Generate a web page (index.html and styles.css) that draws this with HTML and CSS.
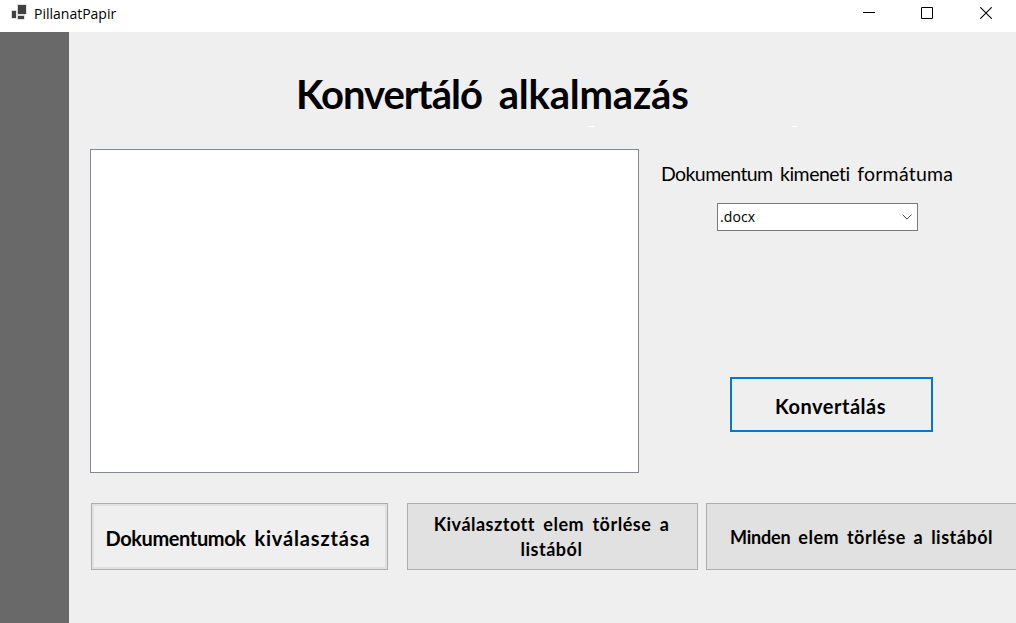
FILE: index.html
```html
<!DOCTYPE html>
<html lang="hu">
<head>
<meta charset="utf-8">
<title>PillanatPapir</title>
<link rel="stylesheet" href="styles.css">
</head>
<body>
<div class="window">
  <header class="titlebar">
    <svg class="app-icon" width="18" height="18" viewBox="0 0 18 18">
      <path fill="#c4c4c4" d="M7.300.600h9.200v9.800H7.300zM1.300 6.300h5.200v8.200H1.300zM7.300 11.300h7.200v4.200H7.300z"/>
      <path fill="#404040" d="M8 1h8v9H8zM2 7h4v7H2zM8 12h6v3H8z"/>
    </svg>
    <span class="app-name">PillanatPapir</span>
    <div class="controls">
      <svg width="12" height="12" viewBox="0 0 12 12"><path d="M0 5.5h12" stroke="#000"/></svg>
      <svg class="maximize" width="12" height="12" viewBox="0 0 12 12"><path d="M.5.5h11v11H.5z" fill="none" stroke="#000"/></svg>
      <svg width="12" height="12" viewBox="0 0 12 12"><path d="M.3.3l11.4 11.4M11.7.3L.3 11.7" stroke="#000" stroke-width="1.1"/></svg>
    </div>
  </header>
  <div class="body">
    <aside class="sidebar"></aside>
    <main class="main">
      <h1 class="title"><span class="title-first">Konvertáló</span> <span class="title-second">alkalmazás</span></h1>
      <i class="glint glint-left"></i>
      <i class="glint glint-right"></i>
      <div class="work">
        <div class="listbox"></div>
        <section class="options">
          <label class="format-label"><span class="snug">Dokumentum</span> kimeneti <span class="loose">formátuma</span></label>
          <div class="combo">
            <span class="combo-value">.docx</span>
            <svg width="10" height="6" viewBox="0 0 10 6"><path d="M.5.6L5 5.1 9.500.6" fill="none" stroke="#444"/></svg>
          </div>
          <button class="btn btn-convert">Konvertálás</button>
        </section>
      </div>
      <div class="actions">
        <button class="btn btn-pick"><span class="snug">Dokumentumok</span> <span class="loose">kiválasztása</span></button>
        <button class="btn btn-remove">Kiválasztott elem törlése a<br>listából</button>
        <button class="btn btn-clear"><span class="snug">Minden</span> elem törlése a listából</button>
      </div>
    </main>
  </div>
</div>
</body>
</html>
```
FILE: styles.css
```css
* { box-sizing: border-box; }

body {
  margin: 0;
  overflow: hidden;
  color: #000;
  font-family: "Open Sans", sans-serif;
}

.window {
  display: flex;
  flex-direction: column;
  width: 1016px;
  height: 623px;
  overflow: hidden;
  background: #efefef;
}

.titlebar {
  display: flex;
  flex: none;
  height: 32px;
  padding: 4px 24px 0 10px;
  background: #fff;
}

.app-icon { margin-right: 6px; }

.app-name {
  font-size: 14px;
  line-height: 20px;
}

.controls {
  display: flex;
  margin: 3px 0 0 auto;
}

.maximize { margin: 0 47px 0 46px; }

.body {
  display: flex;
  flex: 1;
}

.sidebar {
  flex: none;
  width: 69px;
  background: #696969;
}

.main {
  position: relative;
  flex: none;
  width: 947px;
  overflow: hidden;
}

.title {
  height: 117px;
  margin: 0;
  padding: 37px 0 0 227px;
  font: 700 40px/50px "Comic Sans MS", Lato, sans-serif;
  white-space: nowrap;
  word-spacing: 7px;
}

.title-first { letter-spacing: -1px; }
.title-second { letter-spacing: -0.2px; }

.glint {
  position: absolute;
  top: 94px;
  height: 1px;
  background: #fff;
}

.glint-left { left: 519px; width: 7px; }
.glint-right { left: 723px; width: 5px; }

.work {
  display: flex;
  height: 324px;
  padding-left: 21px;
}

.listbox {
  flex: none;
  width: 549px;
  border: 1px solid #828790;
  background: #fff;
}

.options {
  display: flex;
  flex-direction: column;
  padding: 12px 0 0 22px;
}

.format-label {
  font: 400 19.5px/26px "Comic Sans MS", Lato, sans-serif;
  font-variant-ligatures: none;
  letter-spacing: -0.5px;
  word-spacing: 3px;
  white-space: nowrap;
}

.format-label .snug { letter-spacing: -0.6px; }
.format-label .loose { letter-spacing: 0.25px; }

.combo {
  display: flex;
  align-items: center;
  justify-content: space-between;
  width: 201px;
  height: 28px;
  margin: 16px 0 0 56px;
  padding: 0 5px 0 2px;
  border: 1px solid #7a7a7a;
  background: #fff;
  font-size: 14px;
}

.combo-value {
  padding-bottom: 2px;
  letter-spacing: 0.1px;
}

.btn {
  flex: none;
  height: 67px;
  padding: 0;
  border: 1px solid #adadad;
  background: #e1e1e1;
  color: #000;
  font: 700 18px/25px "Comic Sans MS", Lato, sans-serif;
  font-variant-ligatures: none;
  letter-spacing: 0.5px;
  word-spacing: 3.5px;
  text-align: center;
  white-space: nowrap;
}

.btn-convert {
  width: 203px;
  height: 55px;
  margin: 146px 0 0 69px;
  padding: 4px 2px 0 0;
  border: 2px solid #0078d7;
  background: #efefef;
  font-size: 20px;
}

.actions {
  display: flex;
  padding: 30px 0 0 22px;
}

.btn-pick {
  width: 297px;
  margin-right: 19px;
  padding: 4px 3px 0 0;
  background: #efefef;
  box-shadow: inset 0 0 0 2px #e1e1e1;
  font-size: 20px;
}

.btn-pick .snug { letter-spacing: -0.4px; }
.btn-pick .loose { letter-spacing: 0.85px; }

.btn-remove {
  width: 291px;
  margin-right: 8px;
  padding-right: 2px;
}

.btn-clear {
  width: 311px;
  padding-top: 2px;
  word-spacing: 3px;
}

.btn-clear .snug { letter-spacing: -0.2px; }
```
